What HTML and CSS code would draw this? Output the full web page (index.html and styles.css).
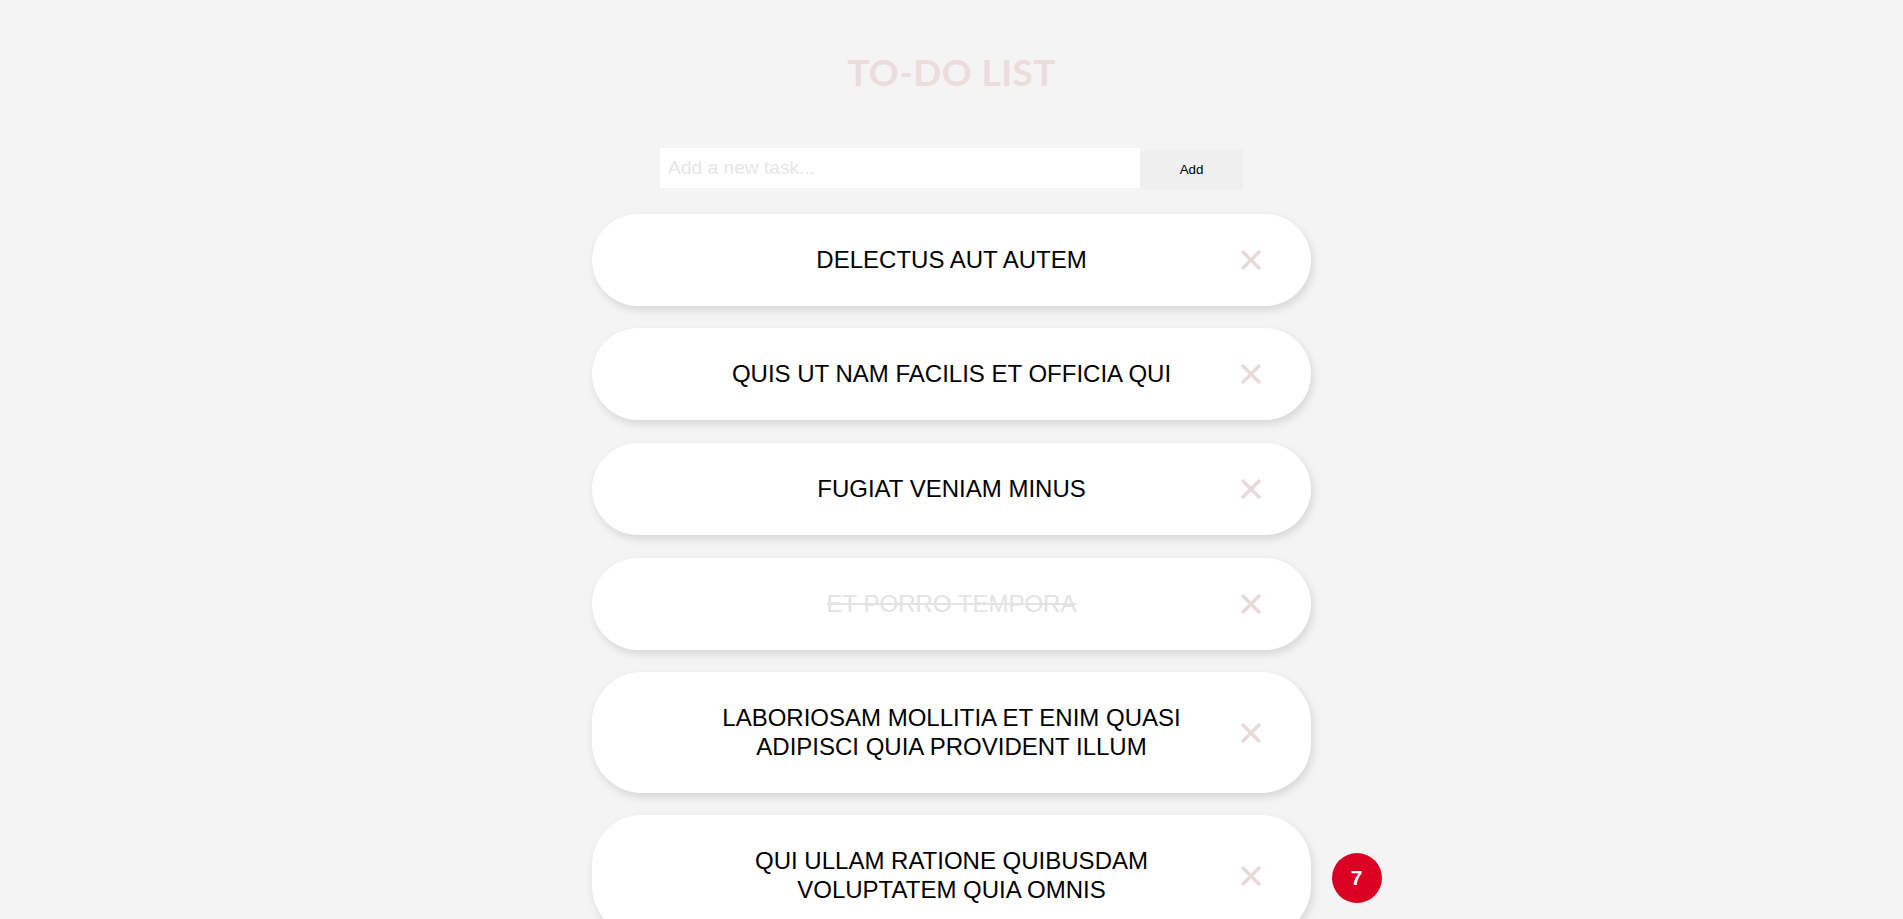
FILE: index.html
```html
<!DOCTYPE html>
<html lang="en">
<head>
<meta charset="utf-8">
<title>To-Do List</title>
<link rel="stylesheet" href="styles.css">
</head>
<body>
<div class="app">
  <h1 class="title">TO-DO LIST</h1>
  <form class="add-form">
    <input class="add-input" type="text" placeholder="Add a new task...">
    <button class="add-btn" type="button">Add</button>
  </form>
  <ul class="tasks">
    <li class="task"><span class="task-text">delectus aut autem</span><span class="remove"><svg viewBox="0 0 24 24" width="24" height="24"><path d="M3 3 L21 21 M21 3 L3 21"/></svg></span></li>
    <li class="task"><span class="task-text">quis ut nam facilis et officia qui</span><span class="remove"><svg viewBox="0 0 24 24" width="24" height="24"><path d="M3 3 L21 21 M21 3 L3 21"/></svg></span></li>
    <li class="task"><span class="task-text">fugiat veniam minus</span><span class="remove"><svg viewBox="0 0 24 24" width="24" height="24"><path d="M3 3 L21 21 M21 3 L3 21"/></svg></span></li>
    <li class="task done"><span class="task-text">et porro tempora</span><span class="remove"><svg viewBox="0 0 24 24" width="24" height="24"><path d="M3 3 L21 21 M21 3 L3 21"/></svg></span></li>
    <li class="task"><span class="task-text">laboriosam mollitia et enim quasi adipisci quia provident illum</span><span class="remove"><svg viewBox="0 0 24 24" width="24" height="24"><path d="M3 3 L21 21 M21 3 L3 21"/></svg></span></li>
    <li class="task"><span class="task-text">qui ullam ratione quibusdam voluptatem quia omnis</span><span class="remove"><svg viewBox="0 0 24 24" width="24" height="24"><path d="M3 3 L21 21 M21 3 L3 21"/></svg></span></li>
    <li class="task"><span class="task-text">illo expedita consequatur quia in</span><span class="remove"><svg viewBox="0 0 24 24" width="24" height="24"><path d="M3 3 L21 21 M21 3 L3 21"/></svg></span></li>
  </ul>
</div>
<div class="count-badge">7</div>
</body>
</html>
```
FILE: styles.css
```css
html, body {
  margin: 0;
  padding: 0;
}
body {
  background: #f4f4f4;
  font-family: "Liberation Sans", Arial, sans-serif;
}
.app {
  width: 719px;
  margin: 0 auto;
  padding-top: 50px;
}
.title {
  margin: 0;
  text-align: center;
  font-family: Lato, "Noto Sans", sans-serif;
  font-weight: 700;
  font-size: 37px;
  line-height: 44px;
  color: #eddcdc;
  letter-spacing: 0.4px;
}
.add-form {
  margin: 54px 0 0;
  display: flex;
  justify-content: center;
  align-items: baseline;
}
.add-input {
  width: 480px;
  height: 40px;
  box-sizing: border-box;
  border: none;
  outline: none;
  padding: 0 8px;
  margin: 0;
  background: #fff;
  font-family: "Liberation Sans", Arial, sans-serif;
  font-size: 19.2px;
  color: #333;
}
.add-input::placeholder {
  color: #e6e6e6;
}
.add-btn {
  width: 103px;
  height: 40px;
  border: none;
  margin: 0;
  background: #efefef;
  font-family: "Liberation Sans", Arial, sans-serif;
  font-size: 13.33px;
  color: #000;
}
.tasks {
  list-style: none;
  margin: 24px 0 0;
  padding: 0;
  display: flex;
  flex-direction: column;
  gap: 22.4px;
}
.task {
  position: relative;
  background: #fff;
  border-radius: 50px;
  box-shadow: 2px 4px 8px rgba(0, 0, 0, 0.12);
  padding: 32px 110px;
  display: flex;
  justify-content: center;
  text-align: center;
}
.task-text {
  font-size: 24px;
  line-height: 28.3px;
  text-transform: uppercase;
  color: #000;
}
.task.done .task-text {
  color: #e3e3e3;
  text-decoration: line-through;
}
.remove {
  position: absolute;
  right: 48px;
  top: 50%;
  width: 24px;
  height: 24px;
  margin-top: -12px;
  display: flex;
}
.remove svg path {
  stroke: #ead9d9;
  stroke-width: 3.6;
  fill: none;
}
.count-badge {
  position: fixed;
  bottom: 16px;
  left: calc(50% + 380px);
  width: 50px;
  height: 50px;
  border-radius: 50%;
  background: #d90021;
  color: #fff;
  font-weight: 700;
  font-size: 21px;
  display: flex;
  align-items: center;
  justify-content: center;
}
```
